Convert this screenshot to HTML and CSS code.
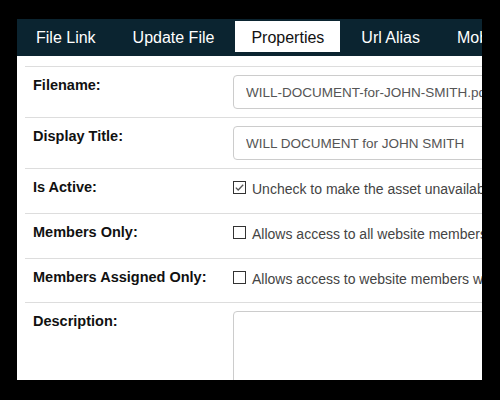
FILE: index.html
```html
<!DOCTYPE html>
<html>
<head>
<meta charset="utf-8">
<link rel="stylesheet" href="styles.css">
</head>
<body>
<div class="frame">
  <nav class="tabs">
    <div class="tab">File Link</div>
    <div class="tab">Update File</div>
    <div class="tab tab-active">Properties</div>
    <div class="tab">Url Alias</div>
    <div class="tab">Mobile</div>
  </nav>
  <div class="form">
    <div class="row">
      <div class="label">Filename:</div>
      <div class="field"><input class="input" type="text" value="WILL-DOCUMENT-for-JOHN-SMITH.pdf" readonly></div>
    </div>
    <div class="row">
      <div class="label">Display Title:</div>
      <div class="field"><input class="input" type="text" value="WILL DOCUMENT for JOHN SMITH" readonly></div>
    </div>
    <div class="row row-check">
      <div class="label">Is Active:</div>
      <div class="check">
        <svg class="box" width="13" height="13" viewBox="0 0 13 13"><rect x="0.5" y="0.5" width="12" height="12" fill="#fff" stroke="#333"/><path d="M2.8 6.6 L5.2 9 L10.2 3.8" fill="none" stroke="#555" stroke-width="1.3"/></svg>
        <span class="check-text">Uncheck to make the asset unavailable to the public.</span>
      </div>
    </div>
    <div class="row row-check">
      <div class="label">Members Only:</div>
      <div class="check">
        <svg class="box" width="13" height="13" viewBox="0 0 13 13"><rect x="0.5" y="0.5" width="12" height="12" fill="#fff" stroke="#333"/></svg>
        <span class="check-text">Allows access to all website members only.</span>
      </div>
    </div>
    <div class="row row-check row-check-last">
      <div class="label">Members Assigned Only:</div>
      <div class="check">
        <svg class="box" width="13" height="13" viewBox="0 0 13 13"><rect x="0.5" y="0.5" width="12" height="12" fill="#fff" stroke="#333"/></svg>
        <span class="check-text">Allows access to website members who are assigned.</span>
      </div>
    </div>
    <div class="row">
      <div class="label">Description:</div>
      <div class="field"><textarea class="textarea" readonly></textarea></div>
    </div>
  </div>
</div>
</body>
</html>
```

FILE: styles.css
```css
html, body {
  margin: 0;
  padding: 0;
  background: #000;
}
body {
  font-family: "Liberation Sans", Arial, sans-serif;
  padding: 19px 18px 20px 17px;
}
.frame {
  width: 465px;
  height: 361px;
  background: #fff;
  overflow: hidden;
}
.tabs {
  display: flex;
  gap: 5px;
  height: 37px;
  box-sizing: border-box;
  padding: 2px 0 0 3px;
  background: #0b2430;
  width: 700px;
}
.tab {
  flex: none;
  padding: 8px 16px 5px;
  line-height: 18px;
  height: 18px;
  font-size: 16px;
  color: #fff;
  white-space: nowrap;
}
.tab-active {
  background: #fff;
  color: #111;
}
.form {
  width: 650px;
  padding: 10px 8px 0;
}
.row {
  display: grid;
  grid-template-columns: 200px 1fr;
  border-top: 1px solid #ddd;
  padding: 8px;
}
.row-check {
  padding-bottom: 14px;
}
.row-check-last {
  padding-bottom: 13px;
}
.label {
  padding-top: 1px;
  font-size: 14.5px;
  line-height: 18px;
  font-weight: bold;
  color: #111;
}
.field {
  display: flex;
}
.input {
  box-sizing: border-box;
  width: 100%;
  height: 34px;
  margin: 0;
  padding: 0 12px;
  border: 1px solid #ccc;
  border-radius: 4px;
  font-family: "Liberation Sans", Arial, sans-serif;
  font-size: 13.5px;
  color: #555;
  background: #fff;
  outline: none;
}
.textarea {
  box-sizing: border-box;
  width: 100%;
  height: 120px;
  margin: 0;
  border: 1px solid #ccc;
  border-radius: 4px;
  background: #fff;
  resize: none;
  outline: none;
}
.check {
  display: flex;
  align-items: flex-start;
  padding-top: 2px;
  white-space: nowrap;
}
.box {
  flex: none;
  margin: 2px 6px 0 0;
}
.check-text {
  font-size: 14px;
  line-height: 20px;
  color: #444;
}
```
